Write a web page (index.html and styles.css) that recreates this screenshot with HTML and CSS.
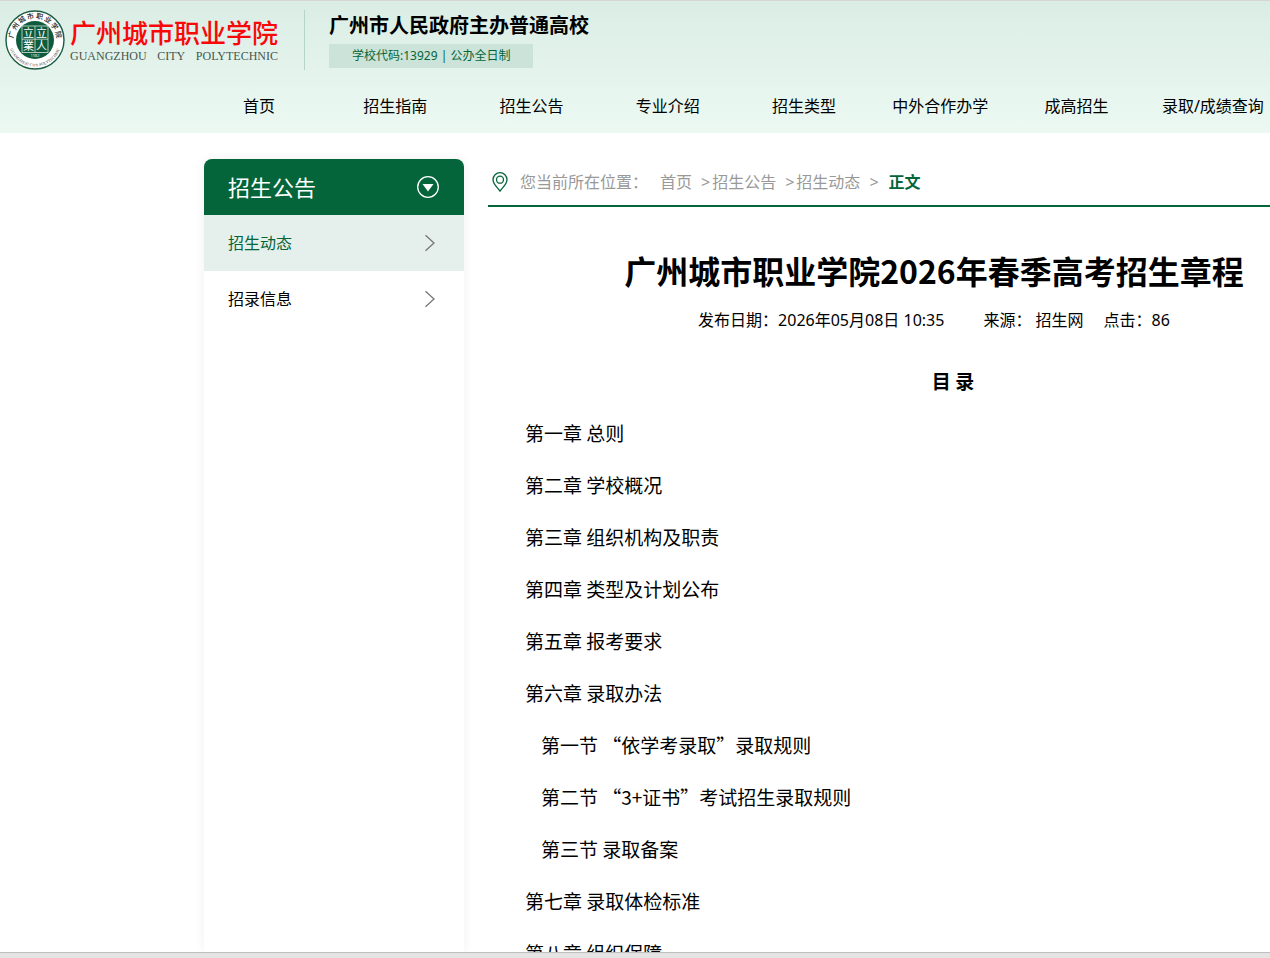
FILE: index.html
```html
<!DOCTYPE html>
<html lang="zh-CN">
<head>
<meta charset="utf-8">
<title>广州城市职业学院2026年春季高考招生章程</title>
<link rel="stylesheet" href="styles.css">
</head>
<body>
<div class="page">
  <header class="header">
    <div class="brand">
      <a class="logo" href="#">
        <svg class="emblem" viewBox="0 0 60 60" aria-hidden="true">
          <defs>
            <path id="arc-bottom" d="M4.200 36A26.500 26.500 0 0 0 55.800 36"/>
          </defs>
          <circle cx="30" cy="30" r="29" fill="#fff" stroke="#1c5c43" stroke-width="1.4"/>
          <circle cx="30" cy="30" r="19" fill="#0f5b3d"/>
          <g class="ring-cn">
            <text x="30" y="8.500" transform="rotate(-77 30 30)">广</text>
            <text x="30" y="8.500" transform="rotate(-55 30 30)">州</text>
            <text x="30" y="8.500" transform="rotate(-33 30 30)">城</text>
            <text x="30" y="8.500" transform="rotate(-11 30 30)">市</text>
            <text x="30" y="8.500" transform="rotate(11 30 30)">职</text>
            <text x="30" y="8.500" transform="rotate(33 30 30)">业</text>
            <text x="30" y="8.500" transform="rotate(55 30 30)">学</text>
            <text x="30" y="8.500" transform="rotate(77 30 30)">院</text>
          </g>
          <text class="ring-en"><textPath href="#arc-bottom" startOffset="50%" text-anchor="middle">GUANGZHOU CITY POLYTECHNIC</textPath></text>
          <path d="M17 16H43V42.500H17ZM30 16V42.500M17 29.200H43" fill="none" stroke="#d5e5dc" stroke-width=".8"/>
          <g class="seal">
            <text x="23.500" y="27">立</text><text x="36.500" y="27">立</text>
            <text x="23.500" y="40">業</text><text x="36.500" y="40">人</text>
          </g>
          <text class="seal-year" x="30" y="47">1982</text>
        </svg>
        <span class="logo-text">
          <span class="logo-cn">广州城市职业学院</span>
          <span class="logo-en"><span>GUANGZHOU</span><span>CITY</span><span>POLYTECHNIC</span></span>
        </span>
      </a>
      <div class="intro">
        <strong class="intro-title">广州市人民政府主办普通高校</strong>
        <span class="intro-code">学校代码:13929 | 公办全日制</span>
      </div>
    </div>
    <nav class="nav">
      <a href="#">首页</a><a href="#">招生指南</a><a href="#">招生公告</a><a href="#">专业介绍</a><a href="#">招生类型</a><a href="#">中外合作办学</a><a href="#">成高招生</a><a href="#">录取/成绩查询</a>
    </nav>
  </header>
  <main class="main">
    <aside class="side">
      <h2 class="side-head">招生公告
        <svg class="side-toggle" viewBox="0 0 24 24" aria-hidden="true"><circle cx="12" cy="12" r="10.3" fill="none" stroke="#fff" stroke-width="1.3"/><path d="M6.500 9H17.500L12 16.500Z" fill="#fff"/></svg>
      </h2>
      <a class="side-item active" href="#">招生动态
        <svg class="chevron" viewBox="0 0 12 18" aria-hidden="true"><path d="M1.5 1.3 10 9 1.5 16.7"/></svg>
      </a>
      <a class="side-item" href="#">招录信息
        <svg class="chevron" viewBox="0 0 12 18" aria-hidden="true"><path d="M1.5 1.3 10 9 1.5 16.7"/></svg>
      </a>
    </aside>
    <article class="article">
      <nav class="crumbs">
        <svg class="pin" viewBox="0 0 16 20" aria-hidden="true"><path d="M8 19C5.500 15.500 1 12 1 7.700a7 7 0 0 1 14 0C15 12 10.500 15.500 8 19Z"/><circle cx="8" cy="7.700" r="3.500"/></svg>
        <span class="crumb-label">您当前所在位置：</span>
        <a href="#">首页</a><span class="sep">&gt;</span><a href="#">招生公告</a><span class="sep">&gt;</span><a href="#">招生动态</a><span class="sep last">&gt;</span><strong>正文</strong>
      </nav>
      <h1 class="title">广州城市职业学院2026年春季高考招生章程</h1>
      <p class="meta"><span class="date">发布日期：2026年05月08日 10:35</span><span class="source">来源： 招生网</span><span>点击：86</span></p>
      <h3 class="toc-title">目 录</h3>
      <div class="toc">
        <p>第一章 总则</p>
        <p>第二章 学校概况</p>
        <p>第三章 组织机构及职责</p>
        <p>第四章 类型及计划公布</p>
        <p>第五章 报考要求</p>
        <p>第六章 录取办法</p>
        <p class="sub">第一节 “依学考录取”录取规则</p>
        <p class="sub">第二节 “3+证书”考试招生录取规则</p>
        <p class="sub">第三节 录取备案</p>
        <p>第七章 录取体检标准</p>
        <p>第八章 组织保障</p>
      </div>
    </article>
  </main>
</div>
<div class="window-edge"></div>
</body>
</html>
```
FILE: styles.css
```css
* { box-sizing: border-box; }
body {
  margin: 0;
  height: 100vh;
  display: flex;
  flex-direction: column;
  overflow: hidden;
  background: #fff;
  color: #000;
  font: 16px/24px "Noto Sans", "Noto Sans CJK SC", sans-serif;
}
a { color: inherit; text-decoration: none; }
h1, h2, h3, p { margin: 0; }

.page {
  flex: 1;
  min-height: 0;
  display: flex;
  flex-direction: column;
  overflow: hidden;
  border-top: 1px solid #d5d5d5;
}
.window-edge {
  height: 6px;
  flex: none;
  background: #e4e4e4;
  border-top: 1px solid #bfbfbf;
}

.header {
  flex: none;
  background: linear-gradient(#daede4, #ecf9f3);
}
.brand {
  display: flex;
  padding: 9px 5px 0;
}
.logo {
  display: flex;
  gap: 5px;
  padding-right: 26px;
  border-right: 1px solid #b5d5c6;
}
.emblem { width: 60px; height: 60px; }
.ring-cn { font-size: 7px; font-weight: 500; fill: #222; text-anchor: middle; }
.ring-en { font-family: "Liberation Serif", serif; font-size: 4px; fill: #333; }
.seal { font-size: 11px; fill: #fff; text-anchor: middle; }
.seal-year { font-size: 4px; fill: #d5e5dc; text-anchor: middle; }
.logo-text {
  display: flex;
  flex-direction: column;
  padding-top: 6px;
}
.logo-cn {
  color: #f80808;
  font-size: 26px;
  font-weight: 500;
  line-height: 34px;
}
.logo-en {
  display: flex;
  justify-content: space-between;
  color: #46564f;
  font: 12px/12px "Liberation Serif", serif;
}
.intro {
  display: flex;
  flex-direction: column;
  align-items: flex-start;
  gap: 4px;
  padding-left: 24px;
}
.intro-title {
  font-family: "Noto Sans CJK SC", sans-serif;
  font-size: 20px;
  line-height: 30px;
}
.intro-code {
  padding: 0 23px;
  background: #cbe3d8;
  color: #04653a;
  font-size: 12px;
  line-height: 24px;
}
.nav {
  display: grid;
  grid-template-columns: repeat(8, 1fr);
  min-width: 1281px;
  padding: 10px 0 0 191px;
  line-height: 53px;
  text-align: center;
}

.main {
  flex: 1;
  display: flex;
  gap: 24px;
  min-height: 0;
  padding: 26px 0 0 204px;
}
.side {
  flex: none;
  width: 260px;
  border-radius: 8px 8px 0 0;
  box-shadow: 0 0 12px rgba(0, 0, 0, .06);
}
.side-head, .side-item {
  display: flex;
  align-items: center;
  justify-content: space-between;
  height: 56px;
  padding: 0 24px;
}
.side-head {
  border-radius: 8px 8px 0 0;
  background: #04653a;
  color: #fff;
  font-size: 22px;
  font-weight: 400;
}
.side-toggle { width: 24px; height: 24px; }
.side-item.active { background: #e5efeb; color: #04653a; }
.chevron {
  width: 12px;
  height: 18px;
  margin-right: 4px;
  fill: none;
  stroke: #777;
  stroke-width: 1.3;
}

.article { flex: 1 0 892px; }
.crumbs {
  display: flex;
  align-items: center;
  height: 48px;
  padding-left: 4px;
  border-bottom: 2px solid #04653a;
  color: #999;
}
.pin {
  width: 16px;
  height: 20px;
  margin-right: 12px;
  fill: none;
  stroke: #04653a;
  stroke-width: 1.3;
}
.crumb-label { margin-right: 12px; }
.sep { margin: 0 2px 0 9px; }
.sep.last { margin-right: 10px; }
.crumbs strong { color: #04653a; }
.title {
  margin-top: 40px;
  font-family: "Noto Sans CJK SC", sans-serif;
  font-size: 32px;
  line-height: 46px;
  text-align: center;
}
.meta {
  display: flex;
  justify-content: center;
  margin-top: 15px;
}
.date { margin-right: 39px; }
.source { margin-right: 20px; }
.toc-title, .toc {
  font-family: "Noto Sans CJK SC", sans-serif;
  font-size: 19px;
  line-height: 52px;
}
.toc-title {
  margin-top: 23px;
  padding-left: 38px;
  text-align: center;
}
.toc { padding-left: 37px; }
.sub { padding-left: 16px; }
```
